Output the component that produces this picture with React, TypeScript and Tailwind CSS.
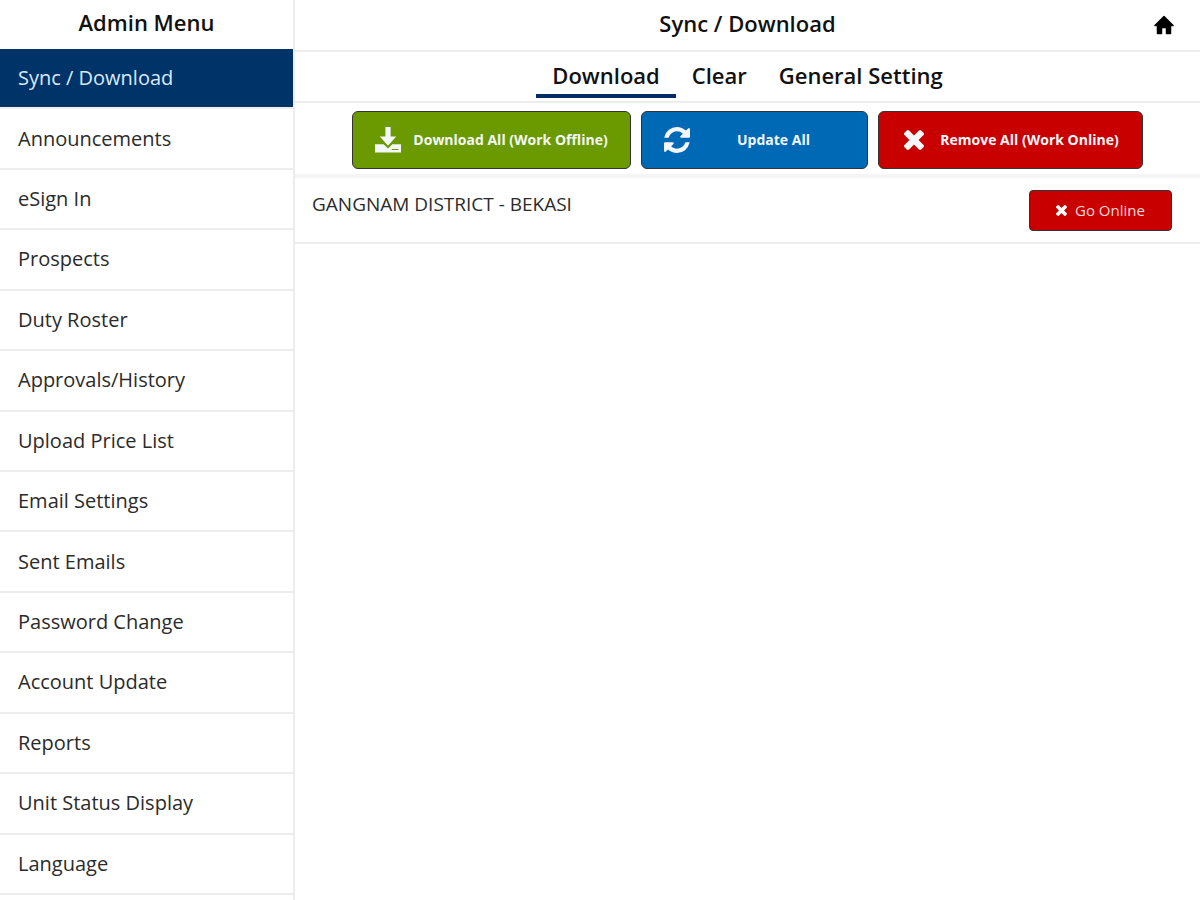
import React from 'react';
import clsx from 'clsx';

const menuItems = [
  'Sync / Download',
  'Announcements',
  'eSign In',
  'Prospects',
  'Duty Roster',
  'Approvals/History',
  'Upload Price List',
  'Email Settings',
  'Sent Emails',
  'Password Change',
  'Account Update',
  'Reports',
  'Unit Status Display',
  'Language',
];

const tabs = ['Download', 'Clear', 'General Setting'];

type IconProps = { className?: string };

const DownloadIcon: React.FC<IconProps> = ({ className }) => (
  <svg viewBox="0 0 26 26" fill="currentColor" className={className} aria-hidden="true">
    <path d="M10.4 0h5.2v9.4h5.6L13 18.800 4.800 9.400h5.600z" />
    <path d="M0 17.200h8.600l4.400 4.200 4.400-4.200H26V25.500H0zM16.800 22v1h6.600v-1z" fillRule="evenodd" />
  </svg>
);

const RefreshIcon: React.FC<IconProps> = ({ className }) => (
  <svg viewBox="128 128 1536 1536" fill="currentColor" className={className} aria-hidden="true">
    <path d="M1639 1056q0 5-1 7-64 268-268 434.5t-478 166.5q-146 0-282.5-55t-243.5-157l-129 129q-19 19-45 19t-45-19-19-45v-448q0-26 19-45t45-19h448q26 0 45 19t19 45-19 45l-137 137q71 66 161 102t187 36q134 0 250-65t186-179q11-17 53-117 8-23 30-23h192q13 0 22.500 9.500t9.500 22.500zm25-800v448q0 26-19 45t-45 19h-448q-26 0-45-19t-19-45 19-45l138-138q-148-137-349-137-134 0-250 65t-186 179q-11 17-53 117-8 23-30 23h-199q-13 0-22.500-9.500t-9.500-22.500v-7q65-268 270-434.500t480-166.500q146 0 284 55.500t245 156.500l130-129q19-19 45-19t45 19 19 45z" />
  </svg>
);

const TimesIcon: React.FC<IconProps> = ({ className }) => (
  <svg viewBox="302 366 1188 1188" fill="currentColor" className={className} aria-hidden="true">
    <path d="M1490 1322q0 40-28 68l-136 136q-28 28-68 28t-68-28l-294-294-294 294q-28 28-68 28t-68-28l-136-136q-28-28-28-68t28-68l294-294-294-294q-28-28-28-68t28-68l136-136q28-28 68-28t68 28l294 294 294-294q28-28 68-28t68 28l136 136q28 28 28 68t-28 68l-294 294 294 294q28 28 28 68z" />
  </svg>
);

const HomeIcon: React.FC<IconProps> = ({ className }) => (
  <svg viewBox="0 0 20 20" fill="currentColor" className={className} aria-hidden="true">
    <path
      d="M10 1.500 19 10.500H16.500V18.500h-4V12.500H7.500v6h-4v-8H1z"
      stroke="currentColor"
      strokeWidth="1.500"
      strokeLinejoin="round"
    />
  </svg>
);

const Sidebar: React.FC = () => (
  <aside className="flex w-[295px] shrink-0 flex-col border-r-2 border-[#ededed] pb-[5px]">
    <h2 className="flex h-[49px] items-center justify-center pb-1 text-[22px] font-semibold">
      Admin Menu
    </h2>
    <nav className="flex grow flex-col">
      <ul className="grid grow auto-rows-fr">
        {menuItems.map((item, i) => (
          <li key={item} className="border-b-2 border-[#ededed]">
            <a
              href="#"
              className={clsx(
                'flex h-full items-center px-[18px] text-xl',
                i === 0 ? 'bg-[#003468] text-[#dbe9f8]' : 'text-[#2b2b2b]'
              )}
            >
              {item}
            </a>
          </li>
        ))}
      </ul>
    </nav>
  </aside>
);

const actionClass =
  'flex h-[58px] items-center gap-3 rounded-md border border-[#333] px-[22px] text-sm font-bold text-[#f4f7fa]';

const App: React.FC = () => {
  return (
    <div className="flex min-h-screen bg-white font-['Open_Sans',sans-serif] text-[#111]">
      <Sidebar />

      <main className="flex min-w-0 grow flex-col">
        <header className="grid h-[52px] grid-cols-[1fr_auto_1fr] items-center border-b-2 border-[#ededed] px-[26px]">
          <h1 className="col-start-2 pb-1 text-[22px] font-semibold">Sync / Download</h1>
          <button aria-label="Home" className="justify-self-end text-black">
            <HomeIcon className="size-5" />
          </button>
        </header>

        <div className="flex h-[51px] items-start justify-center border-b-2 border-[#ededed]">
          {tabs.map((tab, i) => (
            <button
              key={tab}
              className={clsx(
                'h-[46px] border-b-4 px-4 pt-1 text-[22px] font-semibold',
                i === 0 ? 'border-[#002b64]' : 'border-transparent'
              )}
            >
              {tab}
            </button>
          ))}
        </div>

        <div className="flex items-center justify-center gap-[10px] border-b-4 border-[#f5f5f5] pt-2 pb-[5px]">
          <button className={clsx(actionClass, 'w-[279px] bg-[#6a9900]')}>
            <DownloadIcon className="size-[26px] shrink-0" />
            <span className="grow text-center whitespace-nowrap">Download All (Work Offline)</span>
          </button>
          <button className={clsx(actionClass, 'w-[227px] bg-[#0069b6]')}>
            <RefreshIcon className="size-[26px] shrink-0" />
            <span className="grow text-center whitespace-nowrap">Update All</span>
          </button>
          <button className={clsx(actionClass, 'w-[265px] bg-[#c80000]')}>
            <span className="flex w-[26px] shrink-0 justify-center">
              <TimesIcon className="size-5" />
            </span>
            <span className="grow text-center whitespace-nowrap">Remove All (Work Online)</span>
          </button>
        </div>

        <div className="flex h-[66px] items-start justify-between border-b-2 border-[#ededed] pt-3 pr-7 pl-[17px]">
          <span className="text-[19px] text-[#2b2b2b]">GANGNAM DISTRICT - BEKASI</span>
          <button className="flex h-[41px] w-[143px] items-center justify-center gap-2 rounded border border-[#333] bg-[#c80000] text-[15px] text-[#ffd9d9]">
            <TimesIcon className="size-[11px] text-white" />
            Go Online
          </button>
        </div>
      </main>
    </div>
  );
};

export default App;
